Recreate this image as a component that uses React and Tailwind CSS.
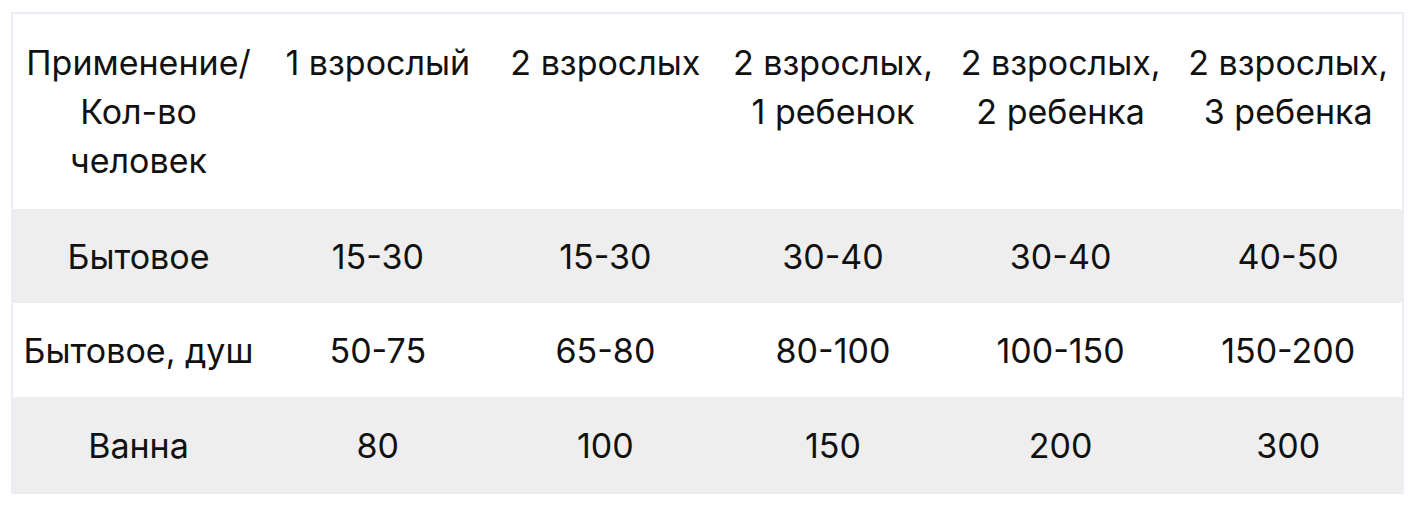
import React from "react";

const heads = [
  ["Применение/", "Кол-во", "человек"],
  ["1 взрослый"],
  ["2 взрослых"],
  ["2 взрослых,", "1 ребенок"],
  ["2 взрослых,", "2 ребенка"],
  ["2 взрослых,", "3 ребенка"],
];

const rows = [
  ["Бытовое", "15-30", "15-30", "30-40", "30-40", "40-50"],
  ["Бытовое, душ", "50-75", "65-80", "80-100", "100-150", "150-200"],
  ["Ванна", "80", "100", "150", "200", "300"],
];

const App = () => {
  return (
    <div className="w-[1416px] h-[509px] bg-white pt-[12px] pl-[11px] font-['Inter','Liberation_Sans',sans-serif] text-[#111]">
      <div className="w-[1393px] border-2 border-[#e8eef3] border-b-[1px]">
        <div className="grid grid-cols-[251px_repeat(5,1fr)] bg-white">
          {heads.map((h, i) => (
            <div
              key={i}
              className="pt-[24px] pb-[24px] text-center text-[34px] leading-[49px] whitespace-nowrap"
            >
              {h.map((line, j) => (
                <div key={j}>{line}</div>
              ))}
            </div>
          ))}
        </div>
        {rows.map((r, i) => (
          <div
            key={i}
            className={
              "grid grid-cols-[251px_repeat(5,1fr)] items-center " +
              (i === 2 ? "h-[96px] " : "h-[94px] ") +
              (i % 2 === 0 ? "bg-[#eeeeee]" : "bg-white")
            }
          >
            {r.map((c, j) => (
              <div key={j} className="text-center text-[34px] leading-[49px] whitespace-nowrap">
                {c}
              </div>
            ))}
          </div>
        ))}
      </div>
    </div>
  );
};

export default App;
